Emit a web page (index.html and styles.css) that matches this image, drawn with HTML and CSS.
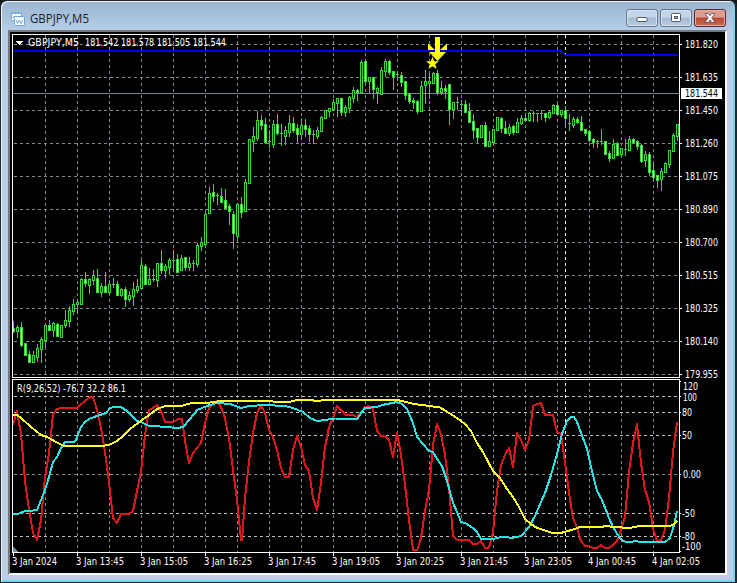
FILE: index.html
```html
<!DOCTYPE html>
<html lang="en">
<head>
    <meta charset="UTF-8">
    <meta name="viewport" content="width=device-width, initial-scale=1.0">
    <title>GBPJPY,M5</title>
    <link rel="stylesheet" href="styles.css">
</head>
<body>
    <div class="window">
        <div class="titlebar">
            <svg class="app-icon" width="14" height="14" viewBox="0 0 14 14">
                <rect x="0.5" y="0.5" width="10" height="8" rx="1" fill="#f4faff" stroke="#78aee0"/>
                <path d="M0.5 1.5h10" stroke="#4f93d6" stroke-dasharray="2 1"/>
                <path d="M2 6l1.5-2 1.5 2" fill="none" stroke="#5c9ad8"/>
                <rect x="3.5" y="4.5" width="10" height="9" rx="1" fill="#fff" stroke="#6aa5dc"/>
                <path d="M5 8l1.5 3.5L8.500 8l1.500 3.500L12 8" fill="none" stroke="#4a8fd2" stroke-width="0.800"/>
            </svg>
            <svg class="title" width="80" height="18">
                <text x="0" y="13" textLength="59" lengthAdjust="spacingAndGlyphs">GBPJPY,M5</text>
            </svg>
            <div class="buttons">
                <div class="btn">
                    <svg width="12" height="12"><rect x="1" y="5.500" width="10" height="4" rx="1" fill="#fff" stroke="#535a66"/></svg>
                </div>
                <div class="btn">
                    <svg width="12" height="12"><rect x="1.500" y="1.500" width="9" height="8" rx="1" fill="#fff" stroke="#535a66"/><rect x="4.500" y="4.500" width="3" height="2" fill="#9db6d1" stroke="#535a66"/></svg>
                </div>
                <div class="btn close">
                    <svg width="12" height="12"><path d="M1 1.500h3.200L6 3.700l1.800-2.200H11L7.800 5.800 11 10.500H7.800L6 8 4.200 10.500H1l3.200-4.700z" fill="#fff" stroke="#5b4450" stroke-width="0.800"/></svg>
                </div>
            </div>
        </div>
        <div class="client">
            <svg id="chart" class="chart" width="715" height="542" viewBox="10 32 715 542"></svg>
        </div>
    </div>
    <script src="chart.js"></script>
</body>
</html>
```

FILE: styles.css
```css
body {
    margin: 0;
    background: #14181c;
    font-family: "DejaVu Sans Condensed", "DejaVu Sans", sans-serif;
    overflow: hidden;
}
.window {
    box-sizing: border-box;
    width: 737px;
    height: 583px;
    display: flex;
    flex-direction: column;
    padding: 0 8px 7px 7px;
    border: 1px solid #20262c;
    border-right-width: 2px;
    border-radius: 7px 7px 0 0;
    background: linear-gradient(#9ab4cf, #b7cfe8 30px, #b9d0e9 100px, #bbcfe6);
    box-shadow: inset 1px 1px 0 #eef6fc, inset -2px -2px 0 #79d5ee;
}
.titlebar {
    display: flex;
    align-items: center;
    height: 29px;
    flex: none;
    padding: 5px 1px 0 3px;
    box-sizing: border-box;
}
.app-icon {
    margin-top: 1px;
}
.title {
    margin: 1px 0 0 5px;
}
.title text {
    font: 12px "Open Sans", "Noto Sans", sans-serif;
    fill: #17222e;
}
.buttons {
    display: flex;
    gap: 2px;
    margin-left: auto;
}
.btn {
    box-sizing: border-box;
    width: 32px;
    height: 18px;
    display: flex;
    align-items: center;
    justify-content: center;
    border: 1px solid #61758c;
    border-radius: 3px;
    background: linear-gradient(#c3d5e7 45%, #a3bbd3 50%, #b5cbe1);
    box-shadow: inset 0 0 0 1px #d8e5f1;
}
.close {
    border-color: #5a2731;
    background: linear-gradient(#dc9c8f 45%, #bc4733 50%, #c8694f);
    box-shadow: inset 0 0 0 1px #e6aea4;
}
.client {
    flex: 1;
    display: flex;
    background: #000;
    border: 2px solid #777b80;
    border-right-color: #f4f6f8;
    border-bottom-color: #f4f6f8;
    overflow: hidden;
}
.chart {
    flex: none;
    shape-rendering: crispEdges;
}
.chart text {
    font-size: 10px;
    fill: #fff;
}
.chart text.current {
    fill: #000;
}
.grid {
    stroke: #7d8794;
    stroke-dasharray: 3 3;
}
.level {
    stroke: #c0c0c0;
    stroke-dasharray: 3 3;
}
.day {
    stroke: #fff;
    stroke-dasharray: 3 3;
}
.frame {
    stroke: #fff;
    fill: none;
}
.bid {
    stroke: #778899;
}
.wick {
    stroke: #38d838;
}
.bull {
    fill: #000;
    stroke: #38d838;
}
.bear {
    fill: #b0ffb0;
    stroke: #38d838;
}
.line {
    fill: none;
    stroke-width: 2;
    stroke-linejoin: round;
}
.red {
    stroke: #dc1818;
}
.aqua {
    stroke: #28e4e4;
}
.yellow {
    stroke: #ffff28;
}
.blue {
    stroke: #0000dc;
}
.mark {
    fill: #ffff00;
    shape-rendering: auto;
}
```

FILE: chart.js
```javascript
// one candle per entry: high, body top, body bottom, low, direction
const candles = `321 328 331 332 d,325 327 331 337 u,322 327 345 346 d,343 343 355 355 d,351 354 362 362 d,351 355 362 362 u,
344 348 357 361 u,337 339 349 362 u,325 325 340 346 u,320 325 330 330 d,322 323 330 336 u,323 324 336 336 d,325 325 337 337 u,
310 320 325 327 u,306 310 321 326 u,299 304 311 314 u,299 302 304 313 u,278 279 304 304 u,272 279 283 286 d,278 279 285 293 u,
270 275 280 284 u,269 278 292 292 d,283 286 292 296 u,272 286 292 292 d,280 284 292 292 u,278 284 284 287 u,281 284 295 295 d,
288 289 295 296 u,287 289 299 306 d,291 295 299 301 u,282 289 296 305 u,279 286 290 292 u,260 265 288 288 u,264 266 284 284 d,
268 279 284 284 u,269 279 280 281 u,263 263 280 286 u,250 263 270 273 d,264 266 270 277 u,258 260 267 274 u,250 260 261 268 u,
254 259 272 272 d,255 258 270 270 u,257 257 267 270 d,257 263 267 270 u,260 263 264 270 u,243 245 264 266 u,237 242 246 250 u,
212 214 244 244 u,187 193 213 213 u,184 192 196 201 d,193 195 196 204 u,188 196 202 202 d,189 200 208 208 d,204 206 211 224 d,
211 214 233 248 d,203 204 236 240 u,197 204 212 217 d,179 182 211 211 u,139 139 183 183 u,127 136 141 151 u,111 120 138 140 u,
115 120 125 129 d,118 124 142 143 d,130 141 142 147 u,120 124 144 147 u,114 124 133 134 d,124 133 134 145 u,126 130 136 144 u,
115 123 132 136 u,117 123 130 132 d,124 128 134 142 d,118 125 134 139 u,119 125 129 136 d,125 128 134 141 d,130 134 134 143 u,
127 130 136 138 u,116 117 131 131 u,110 110 118 118 u,108 108 111 116 u,99 102 109 110 u,98 98 103 116 u,98 98 112 115 d,
105 107 112 116 u,96 97 108 112 u,87 90 98 102 u,89 90 92 100 d,60 62 92 92 u,59 61 81 82 d,77 77 81 92 u,77 77 89 98 d,
87 88 92 103 u,67 70 94 94 u,59 61 71 76 u,60 61 72 74 d,71 71 76 89 d,71 74 75 80 d,72 75 82 86 d,81 81 95 99 d,
93 94 101 103 d,98 100 102 108 d,100 101 111 113 d,81 86 111 111 u,70 81 85 103 u,73 81 83 98 u,72 73 83 83 u,70 73 92 94 d,
81 88 92 94 u,85 88 91 98 d,84 84 109 124 d,102 102 109 118 u,97 102 103 109 d,100 104 105 112 u,100 104 112 112 d,
103 111 122 122 d,114 121 130 138 d,128 128 137 142 d,125 125 137 137 u,122 125 146 146 d,131 141 146 146 u,129 129 142 145 u,
117 117 130 130 u,117 118 128 132 d,121 128 133 133 d,124 127 133 135 u,125 126 132 134 d,118 122 132 132 u,115 118 123 124 u,
114 118 120 121 d,112 113 120 121 u,111 113 114 121 u,113 113 114 121 u,110 113 114 119 u,113 113 117 121 d,111 112 117 118 u,
104 105 113 113 u,104 105 114 114 d,110 110 114 116 u,106 110 118 127 d,114 123 124 130 u,117 119 125 127 u,117 119 122 123 d,
116 122 130 130 d,129 129 133 135 d,130 131 140 141 d,138 139 142 147 d,140 141 142 147 d,129 141 142 144 u,141 141 154 154 d,
151 153 158 161 d,139 144 158 158 u,142 143 155 155 d,148 148 154 155 u,139 149 150 155 u,136 139 150 150 u,138 139 142 143 d,
140 141 146 149 d,144 145 161 162 d,151 154 160 166 u,152 154 172 175 d,162 170 177 178 d,175 175 180 187 d,168 171 179 190 u,
162 163 172 172 u,150 150 164 167 u,133 135 151 151 u,124 124 136 140 u`;

const fast = '13,425 17,411 21,434 25,481 29,509 33,533 37,540 41,520 45,477 49,453 53,414 57,409 61,408 77,408 80,405 85,401 90,397 93,397 97,410 101,428 105,452 109,482 113,518 117,523 121,514 129,514 133,511 137,491 141,472 145,435 149,410 153,408 157,405 161,411 165,422 173,422 177,420 179,418.5 182,419 185,441 189,463 193,453 197,448 201,443 205,423 209,408 213,404 217,401 221,407 225,418 229,438 233,470 237,500 241,540 242,540 245,498 249,462 253,433 257,413 261,405.5 265,413 269,430 273,437 277,450 281,468 285,477 289,477 293,450 297,436 301,447 305,465 309,471 313,498 317,510 321,483 325,447 329,427 333,418 337,406 341,410 345,414.5 353,415 357,417 361,412 365,407 369,406 373,409 377,431 381,436 385,436.5 389,440 393,457 397,432.5 401,455 405,485 409,520 413,550 417,550.5 421,538 425,511 429,490 433,445 437,424 441,434 445,455 449,488 453,536 457,539.5 469,539.5 473,544 477,544 481,541 485,548 489,547.5 493,532 497,491 501,465 505,455 509,448 513,467 517,433 521,440 525,450 529,440 533,406 537,404 541,403 545,415 553,415 557,432 561,434 565,462 569,493 573,518 577,528 581,541 585,546 589,546 593,548 597,548 601,545 605,548 609,548 613,545 617,541 621,530 625,517 629,472 633,443 637,424 641,463 645,490 649,502 653,528 657,541 661,540 665,530 669,498 673,452 677,422';
const middle = '13,514 19,513.5 24,511.5 29,511 37,510 41,500 45,490 49,477 53,462 57,457 61,448 65,442 75,441.5 77,437 81,427 85,422 89,419 97,416 106,413 110,408 114,407 121,407 127,411 137,421 141,422 149,426 160,426.5 178,428 183,427 190,419 197,410 207,406 217,403 230,404 241,408 249,406 265,405 285,406 293,408 303,412 310,418 317,421 325,420 335,418.5 357,419 365,408 377,407 382,405 397,402 402,404 407,409 413,423 417,437 423,444 429,451 433,452 437,459 442,466 447,481 453,503 457,512 461,522 465,523 473,528 477,532 481,539 493,539 503,536.5 512,538 521,536 529,527 535,516 545,493 551,475 557,454 562,434 567,421 571,417 574,417 577,422 583,438 587,449 591,467 597,491 602,500 609,518 613,527 619,537 623,541 628,542.5 636,541 640,542 665,542 670,538 674,525 677,511';
const slow = '13,414.5 17,415 21,418 31,427 41,435 49,438 56,442 64,446 102,446 110,444.5 117,441 123,436 130,429 140,421.5 149,415 157,409 164,406.5 181,406 190,403.5 207,403 220,401 270,401 276,402 289,402 297,400 310,400 317,401 325,400 397,400 402,401 414,404 430,406 440,407.5 449,413 457,418 465,424 471,431 477,443 483,452 493,471 500,478 507,489 513,497 519,507 525,519 531,524 537,528 547,531 552,533 561,533 566,531.5 573,529.5 580,527 602,527 605,526 615,527 629,528 640,526 670,526 674,524 677,521';

let out = '';

function line(cls, x1, y1, x2, y2) {
    out += `<line class="${cls}" x1="${x1}" y1="${y1}" x2="${x2}" y2="${y2}"/>`;
}
function text(str, x, y, width, cls) {
    out += `<text class="${cls || ''}" x="${x}" y="${y}" textLength="${width}" lengthAdjust="spacingAndGlyphs">${str}</text>`;
}

// grid
for (let x = 45; x < 679; x += 32) {
    line('grid', x + 0.5, 35, x + 0.5, 552);
}
for (let y = 44; y < 377; y += 33) {
    line('grid', 14, y + 0.5, 679, y + 0.5);
}
[396, 412, 435, 513, 536].forEach(y => line('level', 14, y + 0.5, 679, y + 0.5));
line('grid', 14, 474.5, 679, 474.5);
line('bid', 13, 93.5, 679, 93.5);
line('day', 565.5, 35, 565.5, 552);

// candles
candles.split(',').forEach((item, i) => {
    const [high, top, bottom, low, dir] = item.trim().split(' ');
    const x = 13 + i * 4;
    line('wick', x + 0.5, +high, x + 0.5, +low + 1);
    if (bottom - top < 2) {
        line('wick', x - 1, +top + 0.5, x + 2, +top + 0.5);
    } else {
        out += `<rect class="${dir === 'u' ? 'bull' : 'bear'}" x="${x - 0.5}" y="${+top + 0.5}" width="2" height="${bottom - top}"/>`;
    }
});

// signal arrow, daily level and star
out += '<polygon class="mark" points="428,43.500 435,50 440,50 447,43.500 447,52 428,52"/>';
out += '<polyline class="line blue" points="13,51 561,51 565,55 678,55"/>';
out += '<polygon class="mark" points="435,37 440,37 440,52 446,52 437.500,61 429,52 435,52"/>';
out += '<polygon class="mark" points="432.500,56.500 434.200,61.200 439,61.200 435.200,64.200 436.600,69 432.500,66.200 428.400,69 429.800,64.200 426,61.200 430.800,61.200"/>';

// indicator
out += `<polyline class="line red" points="${fast}"/>`;
out += `<polyline class="line aqua" points="${middle}"/>`;
out += `<polyline class="line yellow" points="${slow}"/>`;

// frames
out += '<rect x="10" y="32" width="2" height="542" fill="#000"/>';
out += '<rect class="frame" x="12.500" y="34.500" width="667" height="343"/>';
out += '<rect class="frame" x="12.500" y="379.500" width="667" height="173"/>';
out += '<polygon points="13,547 18,552 13,552" fill="#778899"/>';

// price scale
['181.820', '181.635', '181.450', '181.260', '181.075', '180.890', '180.700', '180.515', '180.325', '180.140', '179.955'].forEach((p, i) => {
    line('frame', 680, 44.5 + i * 33, 682, 44.5 + i * 33);
    text(p, 685, 48 + i * 33, 33);
});
out += '<rect x="681" y="88" width="41" height="11" fill="#fff"/>';
text('181.544', 685, 97, 33, 'current');

// indicator scale
[['120', 683, 390, 15], ['100', 683, 401, 14], ['80', 682, 416, 10], ['50', 682, 439, 10], ['0.00', 683, 478, 18], ['-50', 682, 517, 13], ['-80', 682, 540, 13], ['-100', 682, 550, 19]].forEach(l => text(...l));
[381, 396, 412, 435, 474, 513, 536, 551].forEach(y => line('frame', 680, y + 0.5, 681, y + 0.5));

// time scale
['3 Jan 2024', '3 Jan 13:45', '3 Jan 15:05', '3 Jan 16:25', '3 Jan 17:45', '3 Jan 19:05', '3 Jan 20:25', '3 Jan 21:45', '3 Jan 23:05', '4 Jan 00:45', '4 Jan 02:05'].forEach((t, i) => {
    line('frame', 13.5 + i * 64, 553, 13.5 + i * 64, 556);
    text(t, 12 + i * 64, 565, i ? 48 : 45);
});

// captions
out += '<polygon points="16,41 23,41 19.500,45" fill="#fff"/>';
text('GBPJPY,M5', 28, 46, 51);
text('181.542 181.578 181.505 181.544', 85, 46, 141);
text('R(9,26,52) -76.7 32.2 86.1', 17, 392, 109);

document.getElementById('chart').innerHTML = out;
```
